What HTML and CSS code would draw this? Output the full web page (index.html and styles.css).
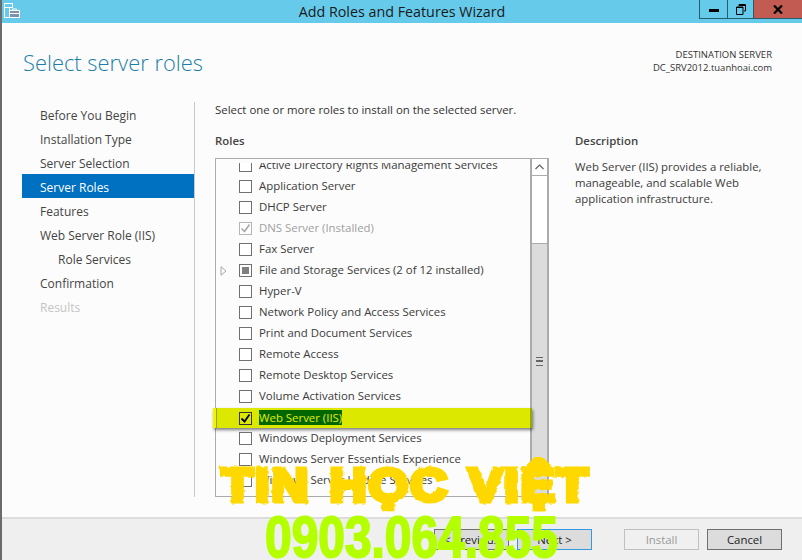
FILE: index.html
```html
<!DOCTYPE html>
<html lang="en">
<head>
<meta charset="utf-8" />
<title>Add Roles and Features Wizard</title>
<link rel="stylesheet" href="styles.css">
</head>
<body>
<svg class="defs" width="0" height="0">
  <filter id="rough" x="-5%" y="-5%" width="110%" height="110%">
    <feTurbulence type="fractalNoise" baseFrequency="0.22" numOctaves="1" seed="4"/>
    <feDisplacementMap in="SourceGraphic" scale="3.5"/>
  </filter>
</svg>
<div class="window">
  <div class="titlebar">
    <svg class="appicon" width="20" height="19" viewBox="0 0 20 19">
      <rect x="4.5" y="3.5" width="8" height="4" fill="#66cbeb" stroke="#fff"/>
      <rect x="4.5" y="7.5" width="5" height="10" fill="#66cbeb" stroke="#fff"/>
      <rect x="9.5" y="10.5" width="10" height="7" fill="#7d93ab" stroke="#fff"/>
      <path d="M12.5 10.5v-1.5h4v1.5M9.5 13.5h10" fill="none" stroke="#fff"/>
    </svg>
    <div class="title">Add Roles and Features Wizard</div>
    <div class="controls">
      <div class="ctl min"><span class="minbar"></span></div>
      <div class="ctl max">
        <svg width="10" height="11" viewBox="0 0 10 11"><path d="M3 2V0.5h6.5V7H8M0.5 3h6.5v7.5H0.5z" fill="none" stroke="#000"/><path d="M0 3.5h7M3 1.5h7" stroke="#000" fill="none"/></svg>
      </div>
      <div class="ctl close">
        <svg width="10" height="9" viewBox="0 0 10 9"><path d="M1 0.5l8 8M9 0.5l-8 8" stroke="#000" stroke-width="2.2" fill="none"/></svg>
      </div>
    </div>
  </div>

  <div class="header">
    <h1>Select server roles</h1>
    <div class="dest">
      <div>DESTINATION SERVER</div>
      <div>DC_SRV2012.tuanhoai.com</div>
    </div>
  </div>

  <div class="main">
    <div class="nav">
      <div class="navitem">Before You Begin</div>
      <div class="navitem">Installation Type</div>
      <div class="navitem">Server Selection</div>
      <div class="navitem active">Server Roles</div>
      <div class="navitem">Features</div>
      <div class="navitem">Web Server Role (IIS)</div>
      <div class="navitem sub">Role Services</div>
      <div class="navitem">Confirmation</div>
      <div class="navitem off">Results</div>
    </div>

    <div class="content">
      <div class="intro">Select one or more roles to install on the selected server.</div>
      <div class="columns">
        <div class="rolescol">
          <div class="label">Roles</div>
          <div class="listbox">
            <div class="rows">
              <div class="row"><span class="cb"></span>Active Directory Rights Management Services</div>
              <div class="row"><span class="cb"></span>Application Server</div>
              <div class="row"><span class="cb"></span>DHCP Server</div>
              <div class="row grey"><span class="cb dis"><svg width="11" height="11" viewBox="0 0 11 11"><path d="M1.5 5.5l3 3 5-7" fill="none" stroke="#aaa" stroke-width="1.6"/></svg></span>DNS Server (Installed)</div>
              <div class="row"><span class="cb"></span>Fax Server</div>
              <div class="row"><svg class="arrow" width="7" height="10" viewBox="0 0 7 10"><path d="M1 .8l5 4.2-5 4.2z" fill="#fff" stroke="#a6a6a6"/></svg><span class="cb part"><i></i></span>File and Storage Services (2 of 12 installed)</div>
              <div class="row"><span class="cb"></span>Hyper-V</div>
              <div class="row"><span class="cb"></span>Network Policy and Access Services</div>
              <div class="row"><span class="cb"></span>Print and Document Services</div>
              <div class="row"><span class="cb"></span>Remote Access</div>
              <div class="row"><span class="cb"></span>Remote Desktop Services</div>
              <div class="row"><span class="cb"></span>Volume Activation Services</div>
              <div class="row picked"><span class="cb on"><svg width="11" height="11" viewBox="0 0 11 11"><path d="M1.5 5.5l3 3 5-7" fill="none" stroke="#000" stroke-width="1.8"/></svg></span><span class="picktext">Web Server (IIS)</span></div>
              <div class="row"><span class="cb"></span>Windows Deployment Services</div>
              <div class="row"><span class="cb"></span>Windows Server Essentials Experience</div>
              <div class="row"><span class="cb"></span>Windows Server Update Services</div>
            </div>
            <div class="scrollbar">
              <div class="sbbtn"><svg width="9" height="6" viewBox="0 0 9 6"><path d="M0.5 5l4-4 4 4" fill="none" stroke="#606060" stroke-width="1.2"/></svg></div>
              <div class="sbgap"></div>
              <div class="sbthumb"><span class="grip"></span></div>
            </div>
          </div>
        </div>
        <div class="desccol">
          <div class="label">Description</div>
          <p>Web Server (IIS) provides a reliable, manageable, and scalable Web application infrastructure.</p>
        </div>
      </div>
    </div>
  </div>

  <div class="footer">
    <div class="btn">&lt; Previous</div>
    <div class="btn next">Next &gt;</div>
    <div class="btn off">Install</div>
    <div class="btn cancel">Cancel</div>
  </div>

  <div class="wm-name">TIN HỌC VIỆT</div>
  <div class="wm-phone">0903.064.855</div>
</div>
</body>
</html>
```

FILE: styles.css
```css
html,body{margin:0;padding:0;}
body{font-family:"Open Sans","Noto Sans",sans-serif;font-size:11.4px;color:#3b3b3b;background:#fcfcfc;}
.defs{position:absolute;}

.window{width:802px;height:560px;position:relative;overflow:hidden;box-sizing:border-box;border-left:2px solid #6b6b6b;display:flex;flex-direction:column;background:#fcfcfc;}

/*====================Title bar=====================*/
.titlebar{height:23px;flex:none;background:#66cbeb;display:flex;position:relative;}
.appicon{flex:none;margin-left:-2px;}
.title{position:absolute;left:0;right:0;top:1px;text-align:center;font-size:14.3px;line-height:22px;color:#1a1a1a;}
.controls{margin-left:auto;display:flex;height:19px;}
.ctl{height:19px;box-sizing:border-box;border:1px solid #2a5a6e;border-top:none;border-right:none;display:flex;align-items:center;justify-content:center;}
.min{width:28px;}
.minbar{display:block;width:10px;height:3px;background:#000;margin-top:3px;}
.max{width:26px;}
.close{width:49px;background:#c25b52;}

/*====================Header=====================*/
.header{height:79px;flex:none;display:flex;justify-content:space-between;}
h1{margin:25px 0 0 21px;font-size:21.9px;font-weight:300;line-height:30px;color:#1c7ea6;}
.dest{margin:25px 30px 0 0;text-align:right;font-size:9.5px;line-height:13px;color:#333;}

/*====================Main=====================*/
.main{flex:1;display:flex;min-height:0;}
.nav{width:172px;margin-left:20px;flex:none;border-right:1px solid #c8c8c8;height:395px;font-size:12px;}
.navitem{height:24px;line-height:28px;padding-left:18px;color:#444;}
.navitem.sub{padding-left:36px;}
.navitem.active{background:#0070c0;color:#fff;}
.navitem.off{color:#c4c4c4;}

.content{flex:1;padding:0 0 0 20px;}
.intro{line-height:16px;color:#333;}
.columns{display:flex;margin-top:15px;}
.rolescol{width:334px;flex:none;}
.label{font-weight:600;line-height:16px;color:#444;}
.listbox{margin-top:9px;width:334px;height:339px;box-sizing:border-box;border:1px solid #ababab;border-right-width:2px;display:flex;position:relative;}
.rows{flex:1;margin-top:-4px;height:340px;position:relative;z-index:1;clip-path:inset(8px -20px 0 -20px);}
.row{height:21px;box-sizing:border-box;padding:0 0 1px 23px;line-height:20px;display:flex;align-items:center;color:#3b3b3b;position:relative;}
.row.grey{color:#a0a0a0;}
.cb{width:11px;height:11px;border:1px solid #707070;margin:1px 7px 0 0;flex:none;display:flex;align-items:center;justify-content:center;background:#fff;}
.cb.dis{border-color:#b5b5b5;}
.cb.part i{display:block;width:7px;height:7px;background:#808080;}
.arrow{position:absolute;left:4px;top:6px;}
.picked{height:20px;margin-top:1px;background:#dde800;color:#e6ee00;margin-left:-3px;margin-right:-2px;padding-left:23px;border-left:3px solid #f0f400;box-shadow:inset 1px 0 #96a800,inset -2px 0 #96a800,1px 2px 3px rgba(0,0,0,.5);}
.cb.on{background:#dde800;border-color:#333;}
.picktext{background:#006600;line-height:15px;}

.scrollbar{width:15px;flex:none;border-left:2px solid #ababab;display:flex;flex-direction:column;}
.sbbtn{height:16px;flex:none;display:flex;align-items:center;justify-content:center;border-bottom:1px solid #ababab;background:#fff;}
.sbgap{height:67px;flex:none;background:#fff;}
.sbthumb{flex:1;background:#dcdcdc;border-top:1px solid #ababab;position:relative;display:flex;justify-content:center;padding-top:113px;}
.grip{display:block;width:7px;height:7px;border-top:1px solid #666;border-bottom:1px solid #666;background:linear-gradient(#dcdcdc 2px,#666 2px,#666 4px,#dcdcdc 4px);}

.desccol{width:190px;margin-left:26px;}
.desccol p{margin:10px 0 0;line-height:16px;color:#3b3b3b;}

/*====================Footer=====================*/
.footer{height:43px;flex:none;box-sizing:border-box;border-top:2px solid #dcdcdc;background:#efefef;display:flex;align-items:center;justify-content:flex-end;padding-right:20px;position:absolute;left:0;right:0;bottom:0;}
.btn{width:75px;height:21px;box-sizing:border-box;border:1px solid #707070;background:#dcdcdc;text-align:center;line-height:19px;color:#222;margin-left:8px;}
.btn.next{border-color:#3399e0;margin-right:24px;}
.btn.off{background:#f0f0f0;border-color:#c0c0c0;color:#9a9a9a;}

/*====================Watermark=====================*/
.wm-name{position:absolute;left:220px;top:458px;font-family:"Liberation Sans",sans-serif;font-weight:700;font-size:47px;line-height:54px;letter-spacing:2px;word-spacing:3px;color:#ffd800;-webkit-text-stroke:5px #ffd800;white-space:nowrap;z-index:5;transform:scaleX(1.08);transform-origin:left top;filter:url(#rough);}
.wm-phone{position:absolute;left:263px;top:514px;font-family:"Liberation Sans",sans-serif;font-weight:700;font-size:57px;line-height:46px;color:#b4ff00;-webkit-text-stroke:2px #b4ff00;white-space:nowrap;z-index:6;transform:scaleX(.84);transform-origin:left top;}
```
